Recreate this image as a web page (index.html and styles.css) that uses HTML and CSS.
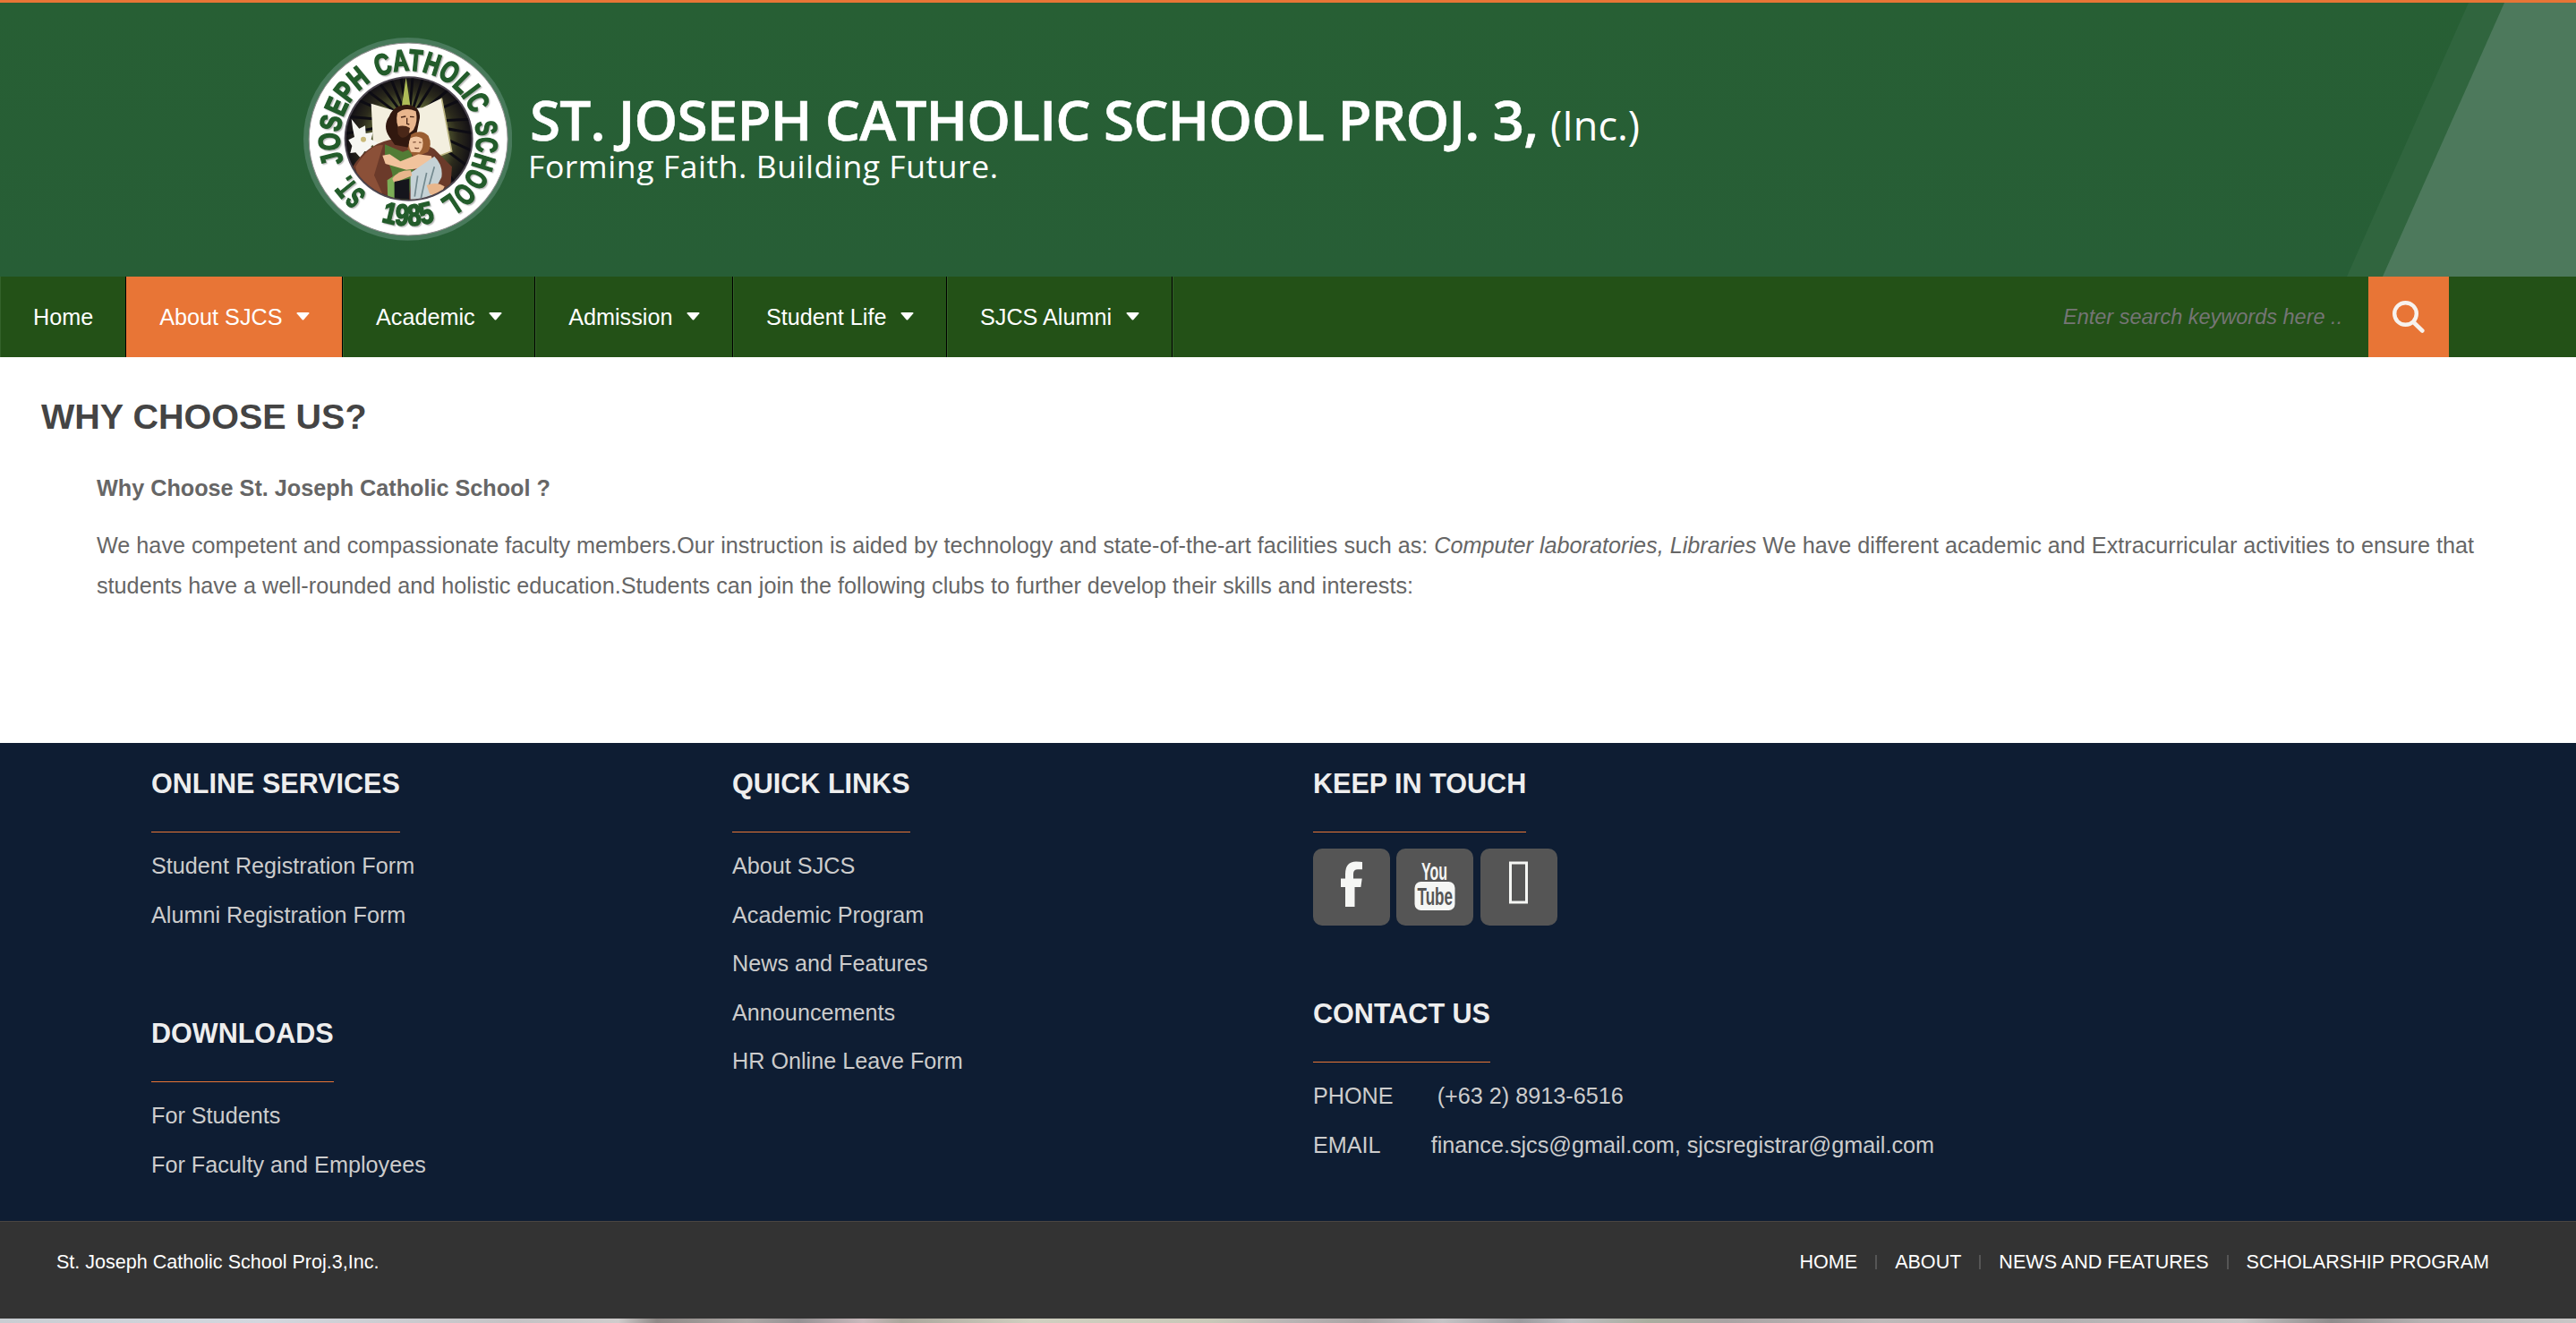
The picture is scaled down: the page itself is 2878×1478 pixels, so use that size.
FILE: index.html
```html
<!DOCTYPE html>
<html lang="en">
<head>
<meta charset="utf-8">
<title>St. Joseph Catholic School</title>
<link rel="stylesheet" href="styles.css">
</head>
<body>
<header class="header">
  <svg class="logo" viewBox="57 67 700 680" preserveAspectRatio="none" role="img" aria-label="School seal">
    <defs>
      <path id="ring" d="M408 637a230 230 0 0 1 0-460a230 230 0 0 1 0 460"/>
      <path id="foot" d="M113 402a295 295 0 0 0 590 0"/>
      <clipPath id="disc"><ellipse cx="410" cy="406" rx="210" ry="203"/></clipPath>
      <radialGradient id="glow"><stop offset="0.3" stop-color="#8c9a4c"/><stop offset="0.75" stop-color="#2b2a1c"/><stop offset="1" stop-color="#0e0b14"/></radialGradient>
    </defs>
    <ellipse cx="407" cy="407" rx="350" ry="340" fill="#487a5b"/>
    <ellipse cx="408.500" cy="407.500" rx="333" ry="322.500" fill="#fff" stroke="#8d8d8d" stroke-width="3"/>
    <ellipse cx="410" cy="406" rx="216" ry="209" fill="#4c4650"/>
    <g clip-path="url(#disc)">
      <rect x="190" y="190" width="440" height="440" fill="url(#glow)"/>
      <g stroke="#0d0c13" stroke-width="9">
        <path d="M410 350L215 265M410 350L245 225M410 350L290 190M410 350L340 180M410 350L380 180M410 350L425 180M410 350L465 180M410 350L515 185M410 350L570 220M410 350L610 265M410 350L640 340M410 350L640 390M410 350L630 450M410 350L610 500M410 350L570 560M410 350L190 390M410 350L190 330"/>
      </g>
      <path d="M401 200l14 95h-28z" fill="#aebc57"/>
      <path d="M284 288l72 22 100-8 64-32 34 178-54 20-88-24-120 4z" fill="#f3efdf"/>
      <path d="M520 270l34 178-54 20" fill="none" stroke="#b9b27e" stroke-width="5"/>
      <path d="M218 340l26 32 20-10 2 26 24-4-6 24 24 12-24 10 2 22-24-4-14 22-16-18-18 2 6-24-12-20 20-10-6-30z" fill="#f6f6f2"/>
      <circle cx="258" cy="408" r="9" fill="#c9b878"/>
      <path d="M205 530q50-100 140-120l70-10 80 40 60 60-10 130H230z" fill="#6b3a2a"/>
      <path d="M232 500q50-80 92-72l-30 100 40 90h-80z" fill="#8b5038"/>
      <path d="M330 425l60 25 28-10 8 70-20 110h-52q20-80-24-160z" fill="#527c35"/>
      <path d="M338 545l24-16 2 90h-24z" fill="#7cae57"/>
      <path d="M345 400q-24-36 0-70 14-36 60-38 44 4 42 44l-10 50-24 50-50-10z" fill="#31180f"/>
      <path d="M372 320q26-22 62-6 8 36-8 62-20 22-44 6-18-28-10-62z" fill="#e9b68d"/>
      <path d="M372 366q22-8 42 4l-4 22q-20 22-36-2z" fill="#4a2718"/>
      <path d="M384 334l16-3M414 332l14 1M404 336v20l8 2" stroke="#4a2718" stroke-width="4" fill="none"/>
      <path d="M418 392q32-20 58 4 14 30-2 54l-44 20-24-30z" fill="#9a5e32"/>
      <path d="M416 404q22-12 40 2 6 30-10 46l-28-2q-14-24-2-46z" fill="#f0c6a1"/>
      <path d="M424 418l10-1M444 418l8 1M430 436q8 5 14 0" stroke="#643620" stroke-width="3" fill="none"/>
      <path d="M322 462l24-4 36 24 60-24 44 6 6 30-50 12-40 4-70-20z" fill="#f1c39c"/>
      <path d="M416 520q30-20 80-55 30 30 24 70l-40 76h-64z" fill="#c5d2d6"/>
      <path d="M470 520l-20 90M496 500l-20 70M440 530l-10 70" stroke="#73898f" stroke-width="5" fill="none"/>
      <path d="M355 540q20-30 62-28l4 18-60 24z" fill="#e8b68c"/>
      <path d="M470 562q34-14 60 4l-20 44-30-20z" fill="#e8b68c"/>
      <path d="M362 550l50-10v72h-50z" fill="#15151c"/>
    </g>
    <g class="seal-text">
      <text textLength="88" lengthAdjust="spacingAndGlyphs"><textPath href="#ring" startOffset="13.3%">ST.</textPath></text>
      <text textLength="310" lengthAdjust="spacingAndGlyphs"><textPath href="#ring" startOffset="30.2%">JOSEPH</textPath></text>
      <text textLength="378" lengthAdjust="spacingAndGlyphs"><textPath href="#ring" startOffset="56%">CATHOLIC</textPath></text>
      <text textLength="306" lengthAdjust="spacingAndGlyphs"><textPath href="#ring" startOffset="81.7%">SCHOOL</textPath></text>
      <text textLength="184" lengthAdjust="spacingAndGlyphs"><textPath href="#foot" startOffset="50%">1985</textPath></text>
    </g>
  </svg>
  <svg class="wordmark" viewBox="0 0 1260 120" fill="#fff">
    <text class="name" x="-1" y="56.500" textLength="1127">ST. JOSEPH CATHOLIC SCHOOL PROJ. 3,</text>
    <text class="inc" x="1139" y="56.500" textLength="100">(Inc.)</text>
    <text class="tag" x="-3" y="99" textLength="525">Forming Faith. Building Future.</text>
  </svg>
</header>

<nav class="nav">
  <a class="nav-item" href="#">Home</a>
  <a class="nav-item active" href="#">About SJCS<svg class="caret" viewBox="0 0 15 9"><path d="M1.500 0h12q1.500 0 .8 1.300L8.500 8q-1 1-2 0L.7 1.300Q0 0 1.500 0z"/></svg></a>
  <a class="nav-item" href="#">Academic<svg class="caret" viewBox="0 0 15 9"><path d="M1.500 0h12q1.500 0 .8 1.300L8.500 8q-1 1-2 0L.7 1.300Q0 0 1.500 0z"/></svg></a>
  <a class="nav-item" href="#">Admission<svg class="caret" viewBox="0 0 15 9"><path d="M1.500 0h12q1.500 0 .8 1.300L8.500 8q-1 1-2 0L.7 1.300Q0 0 1.500 0z"/></svg></a>
  <a class="nav-item" href="#">Student Life<svg class="caret" viewBox="0 0 15 9"><path d="M1.500 0h12q1.500 0 .8 1.300L8.500 8q-1 1-2 0L.7 1.300Q0 0 1.500 0z"/></svg></a>
  <a class="nav-item" href="#">SJCS Alumni<svg class="caret" viewBox="0 0 15 9"><path d="M1.500 0h12q1.500 0 .8 1.300L8.500 8q-1 1-2 0L.7 1.300Q0 0 1.500 0z"/></svg></a>
  <div class="nav-edge"></div>
  <div class="search">
    <span class="search-hint">Enter search keywords here ..</span>
    <button class="search-btn" aria-label="Search"><svg viewBox="0 0 36 36" width="36" height="36" fill="none" stroke="#f7f2ee"><circle cx="14.500" cy="14.500" r="12.300" stroke-width="4.400"/><path d="M23.500 24l9.800 9.500" stroke-width="4.600" stroke-linecap="round"/></svg></button>
  </div>
</nav>

<main class="main">
  <h1>WHY CHOOSE US?</h1>
  <div class="article">
    <p><strong>Why Choose St. Joseph Catholic School ?</strong></p>
    <p>We have competent and compassionate faculty members.Our instruction is aided by technology and state-of-the-art facilities such as: <em>Computer laboratories, Libraries</em> We have different academic and Extracurricular activities to ensure that students have a well-rounded and holistic education.Students can join the following clubs to further develop their skills and interests:</p>
  </div>
</main>

<footer class="footer">
  <div class="col">
    <section>
      <h2>ONLINE SERVICES</h2>
      <ul><li>Student Registration Form</li><li>Alumni Registration Form</li></ul>
    </section>
    <section class="downloads">
      <h2>DOWNLOADS</h2>
      <ul><li>For Students</li><li>For Faculty and Employees</li></ul>
    </section>
  </div>
  <div class="col">
    <section>
      <h2>QUICK LINKS</h2>
      <ul><li>About SJCS</li><li>Academic Program</li><li>News and Features</li><li>Announcements</li><li>HR Online Leave Form</li></ul>
    </section>
  </div>
  <div class="col wide">
    <section>
      <h2>KEEP IN TOUCH</h2>
      <div class="social">
        <a class="tile" href="#" aria-label="Facebook"><svg viewBox="0 0 86 86"><path d="M55 15v8.200h-5q-5 0-5 5V33.500h9.700l-1.300 9.500H46.500v22H36V43h-5v-9.500h5v-5q0-14 12-14 5.500 0 7 .5z" fill="#f5f6f4"/></svg></a>
        <a class="tile" href="#" aria-label="YouTube"><svg viewBox="0 0 86 86"><rect x="20.500" y="37" width="45" height="32" rx="7" fill="#f5f6f4"/><text class="yt" x="28" y="35" textLength="29" lengthAdjust="spacingAndGlyphs" fill="#f5f6f4">You</text><text class="yt" x="23.500" y="63" textLength="39.500" lengthAdjust="spacingAndGlyphs" fill="#555">Tube</text></svg></a>
        <a class="tile" href="#" aria-label="Other"><svg viewBox="0 0 86 86"><rect x="33.500" y="16" width="18" height="44" fill="none" stroke="#f5f6f4" stroke-width="3"/></svg></a>
      </div>
    </section>
    <section class="contact">
      <h2>CONTACT US</h2>
      <ul><li><span class="phone">PHONE</span>(+63 2) 8913-6516</li><li><span class="email">EMAIL</span>finance.sjcs@gmail.com, sjcsregistrar@gmail.com</li></ul>
    </section>
  </div>
</footer>

<div class="bottom">
  <span>St. Joseph Catholic School Proj.3,Inc.</span>
  <div class="bottom-links"><a href="#">HOME</a><a href="#">ABOUT</a><a href="#">NEWS AND FEATURES</a><a href="#">SCHOLARSHIP PROGRAM</a></div>
</div>
<div class="photo-strip"></div>
</body>
</html>
```
FILE: styles.css
```css
* { box-sizing: border-box; }
body {
  margin: 0;
  font-family: "Liberation Sans", Arial, sans-serif;
  font-size: 25.210px;
  color: #666;
  background: #fff;
  height: 1478px;
  overflow: hidden;
}
a { color: inherit; text-decoration: none; }
h1, h2, p, ul { margin: 0; padding: 0; }
ul { list-style: none; }

.header {
  height: 309px;
  border-top: 3px solid #e87536;
  padding: 39px 0 0 339px;
  display: flex;
  align-items: flex-start;
  background: linear-gradient(#275f34, #275e36);
  position: relative;
}
.header::before, .header::after {
  content: "";
  position: absolute;
  top: 0;
  right: 0;
  height: 306px;
}
.header::before { width: 256px; background: #30653e; clip-path: polygon(136px 0, 100% 0, 100% 100%, 0 100%); }
.header::after { width: 216px; background: #4d795c; clip-path: polygon(136px 0, 100% 0, 100% 100%, 0 100%); }
.logo { width: 233.300px; height: 226.700px; }
.seal-text {
  font: bold 100px "Liberation Sans", Arial, sans-serif;
  text-anchor: middle;
  fill: #235c2b;
  stroke: #235c2b;
  stroke-width: 5px;
  filter: drop-shadow(4px 4px 1px #bdbdbd);
}
.wordmark { width: 1260px; height: 120px; margin: 58px 0 0 20.700px; overflow: visible; font-family: "Open Sans", sans-serif; }
.name { font-size: 62px; font-weight: 600; stroke: #fff; stroke-width: 0.600px; }
.inc { font-size: 45px; }
.tag { font-size: 35.500px; }

.nav { display: flex; height: 90px; background: #235117; color: #fff; }
.nav-item {
  display: flex;
  align-items: center;
  padding: 0 36px;
  border-left: 1px solid #34622a;
  border-right: 1px solid #000;
  white-space: nowrap;
}
.nav-item.active { background: #e87536; border-left-color: #e87536; }
.caret { width: 15px; height: 9px; margin-left: 15.500px; margin-top: -2px; fill: #fff; }
.nav-edge { border-left: 1px solid #34622a; }
.search { display: flex; margin-left: auto; margin-right: 142px; align-items: center; }
.search-hint { font-size: 23.500px; font-style: italic; color: #757575; width: 341px; white-space: nowrap; }
.search-btn {
  width: 90px;
  height: 90px;
  padding: 0;
  border: 0;
  background: #e87536;
  display: flex;
  align-items: center;
  justify-content: center;
}

.main { height: 431px; padding: 43.500px 108px 0 46px; }
h1 { font-size: 39.500px; line-height: 45px; color: #444; }
.article { padding-left: 62px; padding-top: 35.100px; line-height: 45.360px; }
.article p + p { margin-top: 18.640px; }

.footer { height: 534px; padding: 15px 0 0 169px; display: flex; background: #0e1d33; color: #ccc; }
.col { width: 649px; }
.col.wide { width: 1100px; }
h2 {
  width: fit-content;
  font-size: 30.550px;
  line-height: 61px;
  padding-bottom: 23px;
  border-bottom: 1px solid #e87536;
  margin-bottom: 10px;
  color: #eee;
  white-space: nowrap;
}
li { line-height: 54.600px; white-space: nowrap; }
.downloads { margin-top: 75.300px; }
.social { display: flex; gap: 7.300px; margin-top: 18px; }
h2:has(+ .social) { margin-bottom: 0; }
.tile { width: 86px; height: 86px; border-radius: 10px; background: #555; }
.tile svg { display: block; width: 86px; height: 86px; }
.yt { font: bold 28.500px "Liberation Sans", Arial, sans-serif; }
.contact { margin-top: 68px; }
.phone { margin-right: 49px; }
.email { margin-right: 56px; }

.bottom {
  height: 109px;
  padding: 0 97px 0 63px;
  border-top: 1px solid #4a4542;
  background: #333;
  color: #fff;
  font-size: 21.550px;
  line-height: 90px;
  display: flex;
  justify-content: space-between;
}
.bottom-links { display: flex; height: 90px; align-items: center; }
.bottom-links a + a { display: flex; align-items: center; }
.bottom-links a + a::before { content: ""; width: 2px; height: 16px; margin: 0 20px 0 20px; background: #555; }
.photo-strip {
  height: 5px;
  background: linear-gradient(90deg, #c9cdd2 0, #d3d7de 10%, #c4c2c4 20%, #cfcccc 24%, #8f8987 25.500%, #aca7a5 29%, #969294 31%, #c9b9bc 33.500%, #aaa69c 35%, #d0cfc0 40%, #c8c8b8 47%, #b9b4b4 50%, #a8a3a3 53%, #c5c3c5 56%, #9b9b9e 59%, #bcbcbf 61%, #a9ad9f 64%, #a9a3a3 67%, #beb9b9 73%, #b3b0b1 80%, #c6c4c4 87%, #8f8c8c 90.500%, #b5b1b1 94%, #c9c7c7 100%);
}
```
